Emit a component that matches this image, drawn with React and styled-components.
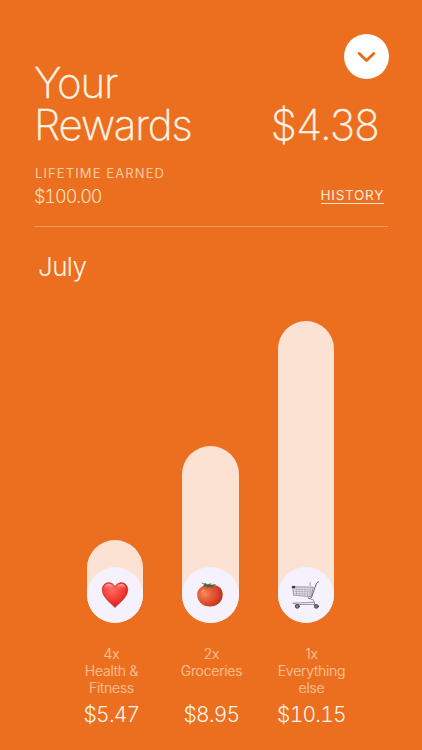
import styled, { createGlobalStyle } from 'styled-components'

const GlobalStyle = createGlobalStyle`
  * {
    box-sizing: border-box;
  }
  body {
    margin: 0;
    background: #eb6f1e;
  }
`

const Screen = styled.main`
  display: flex;
  flex-direction: column;
  width: 422px;
  height: 750px;
  padding: 34px 34px 0 34px;
  overflow: hidden;
  background: #eb6f1e;
  color: #fff4e6;
  font-family: Inter, 'Liberation Sans', sans-serif;
  font-weight: 300;
`

const Header = styled.header`
  display: flex;
  justify-content: space-between;
  height: 120px;
`

const Title = styled.h1`
  margin: 28px 0 0 0;
  font-size: 42px;
  font-weight: 200;
  line-height: 41.5px;
  letter-spacing: -1.15px;
  -webkit-text-stroke: 0.4px #fff4e6;
`

const Summary = styled.div`
  display: flex;
  flex-direction: column;
  align-items: flex-end;
`

const CloseButton = styled.button`
  display: flex;
  align-items: center;
  justify-content: center;
  width: 45px;
  height: 45px;
  margin-right: -1px;
  padding: 0;
  border: 0;
  border-radius: 50%;
  background: #fff;
`

const Balance = styled.div`
  margin: 24.5px 9px 0 0;
  font-size: 42px;
  font-weight: 200;
  line-height: 42px;
  letter-spacing: -0.6px;
  -webkit-text-stroke: 0.4px #fff4e6;
`

const Lifetime = styled.section`
  display: flex;
  justify-content: space-between;
  height: 73px;
  padding: 11px 4px 0 1px;
  border-bottom: 1px solid #f5995f;
`

const Caption = styled.div`
  color: #fccba4;
  font-size: 13px;
  font-weight: 400;
  line-height: 16px;
  letter-spacing: 1.1px;
`

const LifetimeValue = styled.div`
  margin: 5px 0 0 -1px;
  color: #ffdfc2;
  font-size: 18px;
  font-variant-numeric: tabular-nums;
  line-height: 22px;
  letter-spacing: -1px;
`

const HistoryLink = styled.a`
  align-self: flex-start;
  margin-top: 22px;
  border-bottom: 1px solid #ffe3ca;
  color: #ffe9d6;
  font-size: 13.5px;
  font-weight: 400;
  line-height: 16px;
  letter-spacing: 0.7px;
`

const Month = styled.h2`
  height: 32px;
  margin: 24px 0 0 4px;
  font-size: 26px;
  font-weight: 300;
  line-height: 32px;
  letter-spacing: -0.6px;
`

const Chart = styled.div`
  display: flex;
  align-items: flex-end;
  gap: 39.2px;
  height: 340px;
  margin-left: 52.5px;
`

const Bar = styled.div`
  display: flex;
  align-items: flex-end;
  width: 56.5px;
  height: ${({ $height }) => $height}px;
  border-radius: 29px;
  background: #fce2d3;
`

const Badge = styled.div`
  display: flex;
  align-items: center;
  justify-content: center;
  width: 56.5px;
  height: 56.5px;
  border-radius: 50%;
  background: #f5f1fd;
`

const Legend = styled.div`
  display: grid;
  grid-template-columns: repeat(3, 100px);
  margin: 21.5px 0 0 27.5px;
  text-align: center;
`

const LegendItem = styled.div`
  display: flex;
  flex-direction: column;
`

const Label = styled.div`
  height: 51px;
  color: #fcc197;
  font-size: 14px;
  line-height: 17px;
  letter-spacing: -0.2px;
  white-space: pre-line;
  -webkit-text-stroke: 0.2px #fcc197;
`

const Amount = styled.div`
  margin-top: 6px;
  font-size: 21px;
  font-variant-numeric: tabular-nums;
  line-height: 26px;
  letter-spacing: -0.75px;
`

const ChevronIcon = () => (
  <svg width="19" height="12" viewBox="0 0 19 12" fill="none">
    <path d="M2.2 2.5 9.5 9.500 16.8 2.5" stroke="#e76d20" strokeWidth="3" strokeLinecap="round" strokeLinejoin="round" />
  </svg>
)

const HeartIcon = () => (
  <svg width="28" height="28" viewBox="0 0 28 28">
    <defs>
      <radialGradient id="heart" cx="0.4" cy="0.3" r="0.75">
        <stop offset="0" stopColor="#ff6a62" />
        <stop offset="0.55" stopColor="#f43b35" />
        <stop offset="1" stopColor="#c9181b" />
      </radialGradient>
      <linearGradient id="heartShine" x1="0" y1="0" x2="0" y2="1">
        <stop offset="0" stopColor="#ffc4bd" stopOpacity="0.85" />
        <stop offset="1" stopColor="#ff7b72" stopOpacity="0" />
      </linearGradient>
    </defs>
    <path d="M14 26.5C11.500 23 1.300 17 1.300 8.700 1.300 4.600 4 1.700 7.600 1.700c2.900 0 5.200 1.700 6.400 4.200 1.200-2.500 3.500-4.200 6.400-4.200 3.600 0 6.300 2.900 6.300 7C26.700 17 16.500 23 14 26.500Z" fill="url(#heart)" stroke="#b92420" strokeWidth="0.7" />
    <path d="M3 8.500C3 4.900 5 3 7.600 3c2.500 0 4.500 1.500 5.300 4-1.500 2-7 0-9.900 1.500ZM15.200 7c0.800-2.500 2.700-4 5.200-4 2.600 0 4.600 1.900 4.600 5.300-2.900-1.300-8.300 0.700-9.800-1.300Z" fill="url(#heartShine)" />
  </svg>
)

const TomatoIcon = () => (
  <svg width="28" height="26" viewBox="0 0.500 28 26">
    <defs>
      <radialGradient id="tomato" cx="0.3" cy="0.42" r="0.75">
        <stop offset="0" stopColor="#f58c5a" />
        <stop offset="0.35" stopColor="#e85f3c" />
        <stop offset="0.75" stopColor="#d43f25" />
        <stop offset="1" stopColor="#a92a18" />
      </radialGradient>
    </defs>
    <path d="M13 4.200C18 2 26.700 4.500 26.700 12.800 26.700 20.500 21 25 14 25S1.200 20.500 1.200 13.300C1.200 6 8 2.800 13 4.200Z" fill="url(#tomato)" />
    <ellipse cx="7" cy="9.500" rx="2.200" ry="1.300" transform="rotate(-35 7 9.500)" fill="#ffc39a" opacity="0.45" />
    <path d="M5.500 1.300 8.300 2.500 9 1.500l2.300 1.500 4-0.900-1.800 1.500 6.200-0.700-3.600 1.700 1.100 1.500-3.500-1.200-2.400 1.400-0.400-1.900-3.700 0.300 1.300-1.500Z" fill="#3f7031" stroke="#31521f" strokeWidth="0.3" />
  </svg>
)

const CartIcon = () => (
  <svg width="30" height="30" viewBox="1.4 0 30 30" fill="none" strokeLinecap="round">
    <path d="m3.500 6.800 20.100 0.400-2.100 9.400-17.100-1.400Z" fill="#e9e7f0" stroke="#7b787f" strokeWidth="0.7" />
    <path d="M3.800 9.200 23 9.800M4 11.300l18.500 0.700M4.200 13.300l17.900 0.900M6.500 7l0.600 8.200M9.500 7l0.400 8.400M12.500 7l0.200 8.600M15.500 7l-0.300 8.900M18.500 7l-0.700 9.200M21.200 7l-1.200 9.400" stroke="#9c99a1" strokeWidth="0.6" />
    <path d="M2.800 6.300h2.500v1.500H2.800Z" fill="#222" stroke="#222" strokeWidth="0.5" />
    <path d="M29 1.800c-0.900-0.100-2.200 1.400-2.700 2.900L22 17.100c-0.400 1.200-1.500 1.400-3 1.200" stroke="#56535a" strokeWidth="0.9" />
    <path d="M20.500 5.500V2.500M18.500 17l1 1.500 4.100 1.300 1.500 4.200M3.500 23.200l21.500-0.900M3.500 23.200l3.500 1.300h18" stroke="#85828a" strokeWidth="0.8" />
    <circle cx="7.700" cy="26.300" r="1.900" fill="#8a878d" stroke="#3a3a3d" strokeWidth="1" />
    <circle cx="26.700" cy="26.300" r="1.900" fill="#8a878d" stroke="#3a3a3d" strokeWidth="1" />
  </svg>
)

const rewards = [
  { height: 83.5, icon: HeartIcon, label: '4x\nHealth &\nFitness', amount: '$5.47' },
  { height: 177, icon: TomatoIcon, label: '2x\nGroceries', amount: '$8.95' },
  { height: 302.5, icon: CartIcon, label: '1x\nEverything\nelse', amount: '$10.15' },
]

const App = () => {
  return (
    <>
      <GlobalStyle />
      <Screen>
        <Header>
          <Title>Your<br />Rewards</Title>
          <Summary>
            <CloseButton aria-label="Close">
              <ChevronIcon />
            </CloseButton>
            <Balance>$4.38</Balance>
          </Summary>
        </Header>
        <Lifetime>
          <div>
            <Caption>LIFETIME EARNED</Caption>
            <LifetimeValue>$100.00</LifetimeValue>
          </div>
          <HistoryLink>HISTORY</HistoryLink>
        </Lifetime>
        <Month>July</Month>
        <Chart>
          {rewards.map(({ height, icon: Icon, amount }) => (
            <Bar key={amount} $height={height}>
              <Badge>
                <Icon />
              </Badge>
            </Bar>
          ))}
        </Chart>
        <Legend>
          {rewards.map(({ label, amount }) => (
            <LegendItem key={amount}>
              <Label>{label}</Label>
              <Amount>{amount}</Amount>
            </LegendItem>
          ))}
        </Legend>
      </Screen>
    </>
  )
}

export default App
